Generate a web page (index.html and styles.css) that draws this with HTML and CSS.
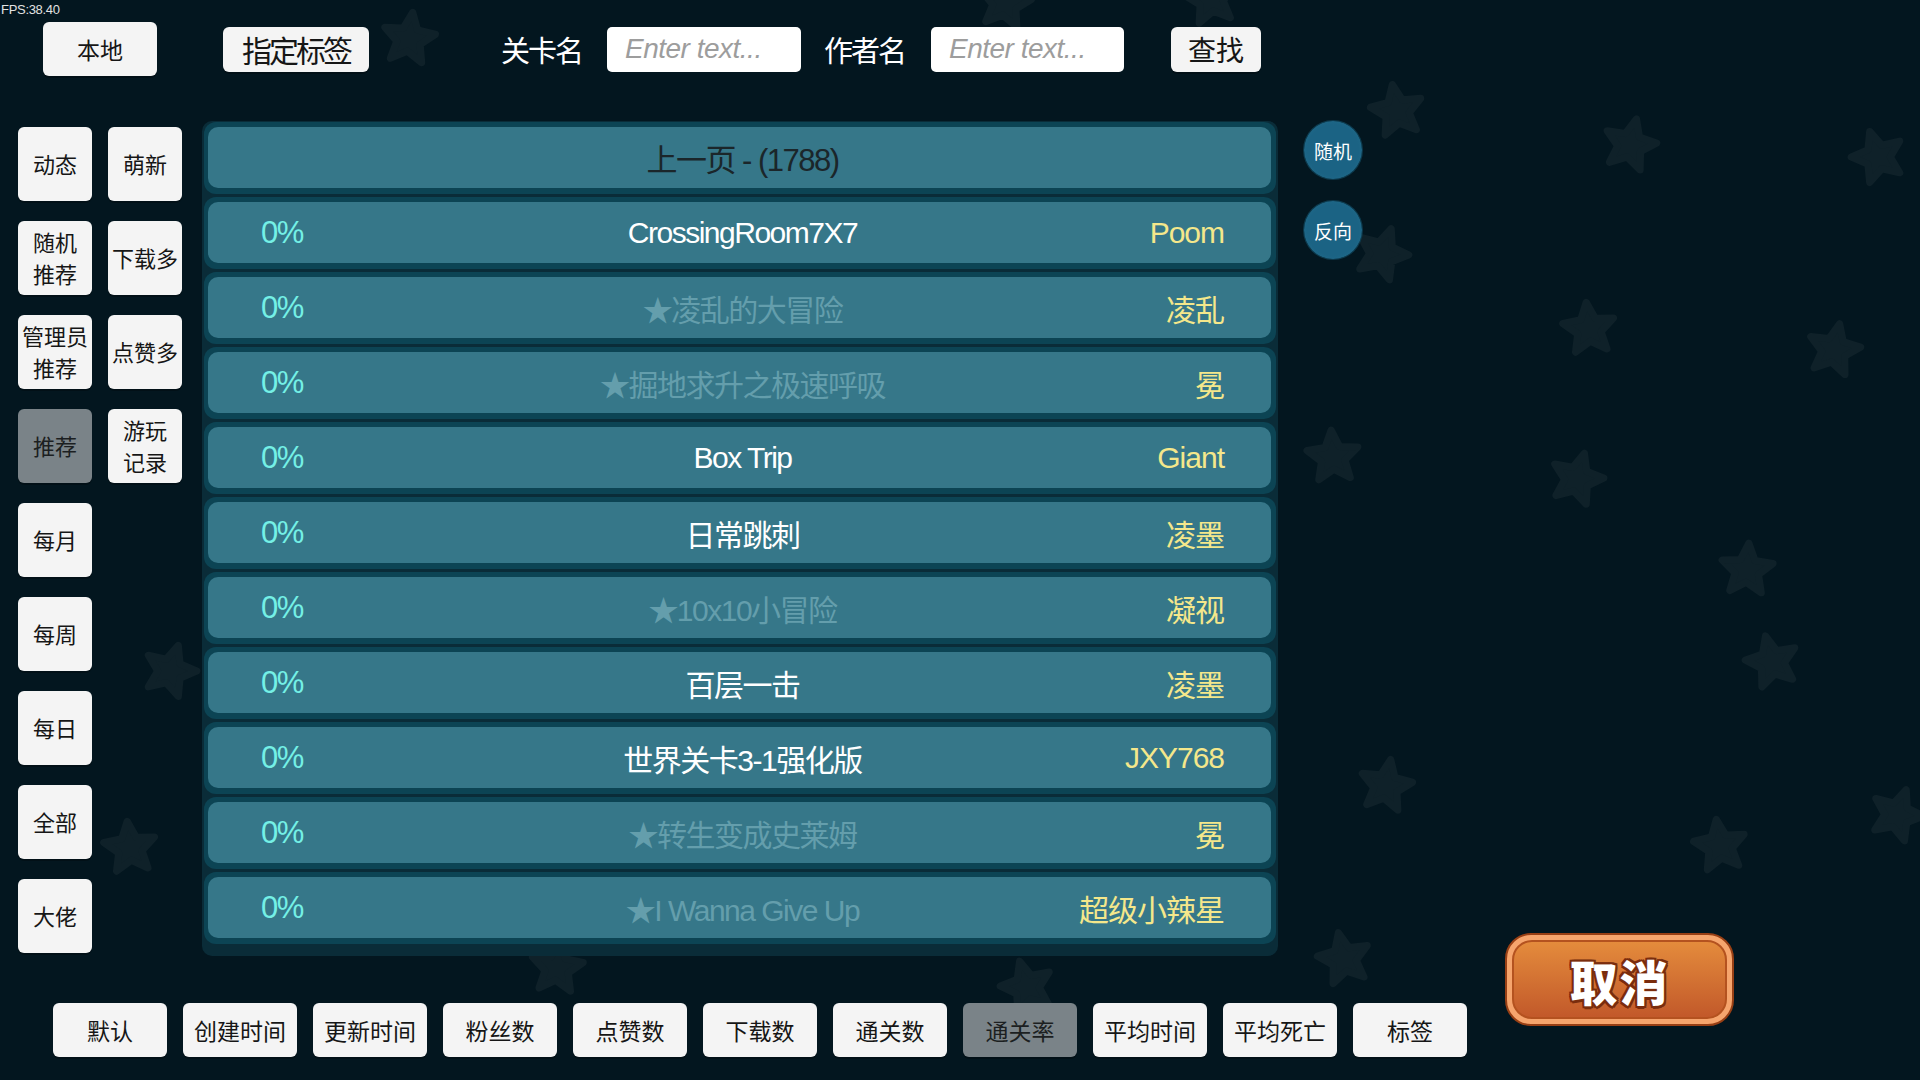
FILE: index.html
```html
<!DOCTYPE html>
<html>
<head>
  <meta charset="UTF-8">
  <title>关卡列表</title>
  <meta name="viewport" content="width=device-width,initial-scale=1.0">
  <link rel="stylesheet" href="styles.css">
</head>
<body>
  <div class="fps">FPS:38.40</div>

  <!-- background stars -->
  <div class="sky">
    <svg class="star s1" viewBox="-32 -32 64 64"><use href="#st"/></svg>
    <svg class="star s2" viewBox="-32 -32 64 64"><use href="#st"/></svg>
    <svg class="star s3" viewBox="-32 -32 64 64"><use href="#st"/></svg>
    <svg class="star s4" viewBox="-32 -32 64 64"><use href="#st"/></svg>
    <svg class="star s5" viewBox="-32 -32 64 64"><use href="#st"/></svg>
    <svg class="star s6" viewBox="-32 -32 64 64"><use href="#st"/></svg>
    <svg class="star s7" viewBox="-32 -32 64 64"><use href="#st"/></svg>
    <svg class="star s8" viewBox="-32 -32 64 64"><use href="#st"/></svg>
    <svg class="star s9" viewBox="-32 -32 64 64"><use href="#st"/></svg>
    <svg class="star s10" viewBox="-32 -32 64 64"><use href="#st"/></svg>
    <svg class="star s11" viewBox="-32 -32 64 64"><use href="#st"/></svg>
    <svg class="star s12" viewBox="-32 -32 64 64"><use href="#st"/></svg>
    <svg class="star s13" viewBox="-32 -32 64 64"><use href="#st"/></svg>
    <svg class="star s14" viewBox="-32 -32 64 64"><use href="#st"/></svg>
    <svg class="star s15" viewBox="-32 -32 64 64"><use href="#st"/></svg>
    <svg class="star s16" viewBox="-32 -32 64 64"><use href="#st"/></svg>
    <svg class="star s17" viewBox="-32 -32 64 64"><use href="#st"/></svg>
    <svg class="star s18" viewBox="-32 -32 64 64"><use href="#st"/></svg>
    <svg class="star s19" viewBox="-32 -32 64 64"><use href="#st"/></svg>
    <svg class="star s20" viewBox="-32 -32 64 64"><use href="#st"/></svg>
    <svg class="star s21" viewBox="-32 -32 64 64"><use href="#st"/></svg>
    <svg width="0" height="0" class="defs">
      <defs>
        <polygon id="st" points="0,-26 7.05,-9.7 24.7,-8 11.4,3.7 15.3,21 0,12 -15.3,21 -11.4,3.7 -24.7,-8 -7.05,-9.7"/>
      </defs>
    </svg>
  </div>

  <div class="screen">
    <div class="top">
      <div class="btn local">本地</div>
      <div class="btn tagpick">指定标签</div>
      <div class="label lvl">关卡名</div>
      <input class="field f1" type="text" placeholder="Enter text...">
      <div class="label auth">作者名</div>
      <input class="field f2" type="text" placeholder="Enter text...">
      <div class="btn find">查找</div>
    </div>

    <div class="main">
      <div class="side">
        <div class="btn">动态</div>
        <div class="btn">萌新</div>
        <div class="btn">随机<br>推荐</div>
        <div class="btn">下载多</div>
        <div class="btn">管理员<br>推荐</div>
        <div class="btn">点赞多</div>
        <div class="btn on">推荐</div>
        <div class="btn">游玩<br>记录</div>
        <div class="btn solo">每月</div>
        <div class="btn solo">每周</div>
        <div class="btn solo">每日</div>
        <div class="btn solo">全部</div>
        <div class="btn solo">大佬</div>
      </div>

      <div class="list">
        <div class="row prev"><div class="cell">上一页 - (1788)</div></div>
        <div class="row"><div class="cell"><span class="pct">0%</span><span class="name">CrossingRoom7X7</span><span class="who">Poom</span></div></div>
        <div class="row"><div class="cell"><span class="pct">0%</span><span class="name dim">★凌乱的大冒险</span><span class="who">凌乱</span></div></div>
        <div class="row"><div class="cell"><span class="pct">0%</span><span class="name dim">★掘地求升之极速呼吸</span><span class="who">冕</span></div></div>
        <div class="row"><div class="cell"><span class="pct">0%</span><span class="name">Box Trip</span><span class="who">Giant</span></div></div>
        <div class="row"><div class="cell"><span class="pct">0%</span><span class="name">日常跳刺</span><span class="who">凌墨</span></div></div>
        <div class="row"><div class="cell"><span class="pct">0%</span><span class="name dim">★10x10小冒险</span><span class="who">凝视</span></div></div>
        <div class="row"><div class="cell"><span class="pct">0%</span><span class="name">百层一击</span><span class="who">凌墨</span></div></div>
        <div class="row"><div class="cell"><span class="pct">0%</span><span class="name">世界关卡3-1强化版</span><span class="who">JXY768</span></div></div>
        <div class="row"><div class="cell"><span class="pct">0%</span><span class="name dim">★转生变成史莱姆</span><span class="who">冕</span></div></div>
        <div class="row"><div class="cell"><span class="pct">0%</span><span class="name dim">★I Wanna Give Up</span><span class="who">超级小辣星</span></div></div>
      </div>

      <div class="rounds">
        <div class="round">随机</div>
        <div class="round">反向</div>
      </div>
    </div>

    <div class="bottom">
      <div class="sorts">
        <div class="btn">默认</div>
        <div class="btn">创建时间</div>
        <div class="btn">更新时间</div>
        <div class="btn">粉丝数</div>
        <div class="btn">点赞数</div>
        <div class="btn">下载数</div>
        <div class="btn">通关数</div>
        <div class="btn on">通关率</div>
        <div class="btn">平均时间</div>
        <div class="btn">平均死亡</div>
        <div class="btn">标签</div>
      </div>
      <div class="cancel"><span>取消</span></div>
    </div>
  </div>
</body>
</html>
```

FILE: styles.css
```css
body{
  margin:0;width:1920px;height:1080px;overflow:hidden;position:relative;
  background:#03161f;
  font-family:"Liberation Sans","Noto Sans CJK SC",sans-serif;
}

.fps{position:absolute;left:1px;top:2px;z-index:5;font-size:13px;color:#e2e2e2;letter-spacing:-.3px;}

/* star field */
.sky{position:absolute;top:0;left:0;right:0;bottom:0;z-index:0;pointer-events:none;}
.defs{position:absolute;}
.star{position:absolute;width:66px;height:66px;fill:#0f2129;stroke:#0f2129;stroke-width:7;stroke-linejoin:round;}
.s1{left:376px;top:6px;transform:rotate(8deg);}
.s2{left:1364px;top:78px;transform:rotate(-10deg);}
.s3{left:1597px;top:112px;transform:rotate(14deg);}
.s4{left:1845px;top:124px;transform:rotate(-18deg);}
.s5{left:1349px;top:221px;transform:rotate(20deg);}
.s6{left:1556px;top:296px;transform:rotate(-6deg);}
.s7{left:1801px;top:317px;transform:rotate(12deg);}
.s8{left:1300px;top:424px;transform:rotate(-4deg);}
.s9{left:1544px;top:446px;transform:rotate(16deg);}
.s10{left:1714px;top:537px;transform:rotate(4deg);}
.s11{left:1739px;top:629px;transform:rotate(-14deg);}
.s12{left:1353px;top:753px;transform:rotate(10deg);}
.s13{left:1687px;top:813px;transform:rotate(-8deg);}
.s14{left:1864px;top:782px;transform:rotate(20deg);}
.s15{left:1311px;top:926px;transform:rotate(-12deg);}
.s16{left:137px;top:638px;transform:rotate(18deg);}
.s17{left:97px;top:815px;transform:rotate(-6deg);}
.s18{left:524px;top:935px;transform:rotate(6deg);}
.s19{left:994px;top:954px;transform:rotate(-16deg);}
.s20{left:972px;top:-30px;transform:rotate(10deg);}
.s21{left:1178px;top:-34px;transform:rotate(-10deg);}

.screen{position:relative;z-index:1;}

/* generic light button */
.btn{
  background:#f4f4f4;border-radius:6px;color:#161616;
  display:flex;align-items:center;justify-content:center;text-align:center;
  font-family:"Noto Sans CJK SC",sans-serif;
  box-shadow:0 2px 0 rgba(0,0,0,.25);
}
.btn.on{background:#7a8388;color:#1c1f21;}

/* top bar */
.top{display:flex;align-items:center;height:54px;padding-top:22px;}
.local{width:114px;height:54px;margin-left:43px;font-size:23px;}
.tagpick{width:146px;height:45px;margin-left:66px;font-size:30px;letter-spacing:-3px;}
.label{color:#fff;font-family:"Noto Sans CJK SC",sans-serif;font-size:29px;letter-spacing:-2px;}
.lvl{margin-left:132px;width:87px;}
.auth{margin-left:23px;width:88px;}
.field{
  box-sizing:border-box;height:45px;border:0;border-radius:5px;background:#fff;
  padding:0 0 0 18px;font-family:"Liberation Sans",sans-serif;font-style:italic;font-size:28px;
  letter-spacing:-.5px;outline:none;
}
.field::placeholder{color:#9d9d9d;}
.f1{width:194px;margin-left:19px;}
.f2{width:193px;margin-left:19px;}
.find{width:90px;height:45px;margin-left:47px;font-size:28px;}

/* middle */
.main{display:flex;align-items:flex-start;margin-top:45px;height:835px;}

.side{display:grid;grid-template-columns:74px 74px;grid-auto-rows:74px;gap:20px 16px;margin:6px 0 0 18px;}
.side .btn{font-size:22px;line-height:1.45;}
.side .solo{grid-column:1;}

.list{
  margin-left:20px;width:1076px;height:835px;box-sizing:border-box;
  background:#0a2c38;border-radius:10px;padding:1px 2px;
}
.row{background:#0c4454;border-radius:12px;padding:5px 5px 6px 4px;margin-bottom:3px;}
.cell{
  height:61px;background:#367789;border-radius:10px;
  display:grid;grid-template-columns:1fr auto 1fr;align-items:center;
  padding:0 47px 0 53px;font-size:30px;letter-spacing:-1.5px;
}
.pct{color:#74f0e6;font-size:31px;}
.name{color:#fff;}
.name.dim{color:#649eac;}
.who{color:#f4e78b;justify-self:end;letter-spacing:-1px;}
.prev .cell{display:flex;justify-content:center;color:#1b262a;font-size:31px;}

.rounds{display:flex;flex-direction:column;gap:22px;margin-left:26px;}
.round{
  width:58px;height:58px;border-radius:50%;
  background:radial-gradient(circle,#1b6384 62%,#26718f 100%);
  box-shadow:0 0 0 1px #0c3a4d;
  color:#fff;font-family:"Noto Sans CJK SC",sans-serif;font-size:19px;
  display:flex;align-items:center;justify-content:center;
}

/* bottom */
.bottom{display:flex;align-items:flex-start;margin-top:-23px;}
.sorts{display:flex;gap:16px;margin:70px 0 0 53px;}
.sorts .btn{width:114px;height:54px;font-size:23px;}

.cancel{
  margin-left:38px;width:229px;height:93px;box-sizing:border-box;
  border:2px solid #983f14;border-radius:26px;background:#f6a56d;padding:5px;
}
.cancel span{
  display:flex;align-items:center;justify-content:center;height:100%;box-sizing:border-box;
  border:2px solid #b4521f;border-radius:20px;
  background:linear-gradient(#e48b3c,#c2592a);
  color:#fff;font-family:"Noto Sans CJK SC",sans-serif;font-weight:900;font-size:48px;letter-spacing:2px;
  text-shadow:2px 0 #7a2c0d,-2px 0 #7a2c0d,0 2px #7a2c0d,0 -2px #7a2c0d,2px 2px #7a2c0d,-2px 2px #7a2c0d,2px -2px #7a2c0d,-2px -2px #7a2c0d,0 3px #7a2c0d;
}
```
